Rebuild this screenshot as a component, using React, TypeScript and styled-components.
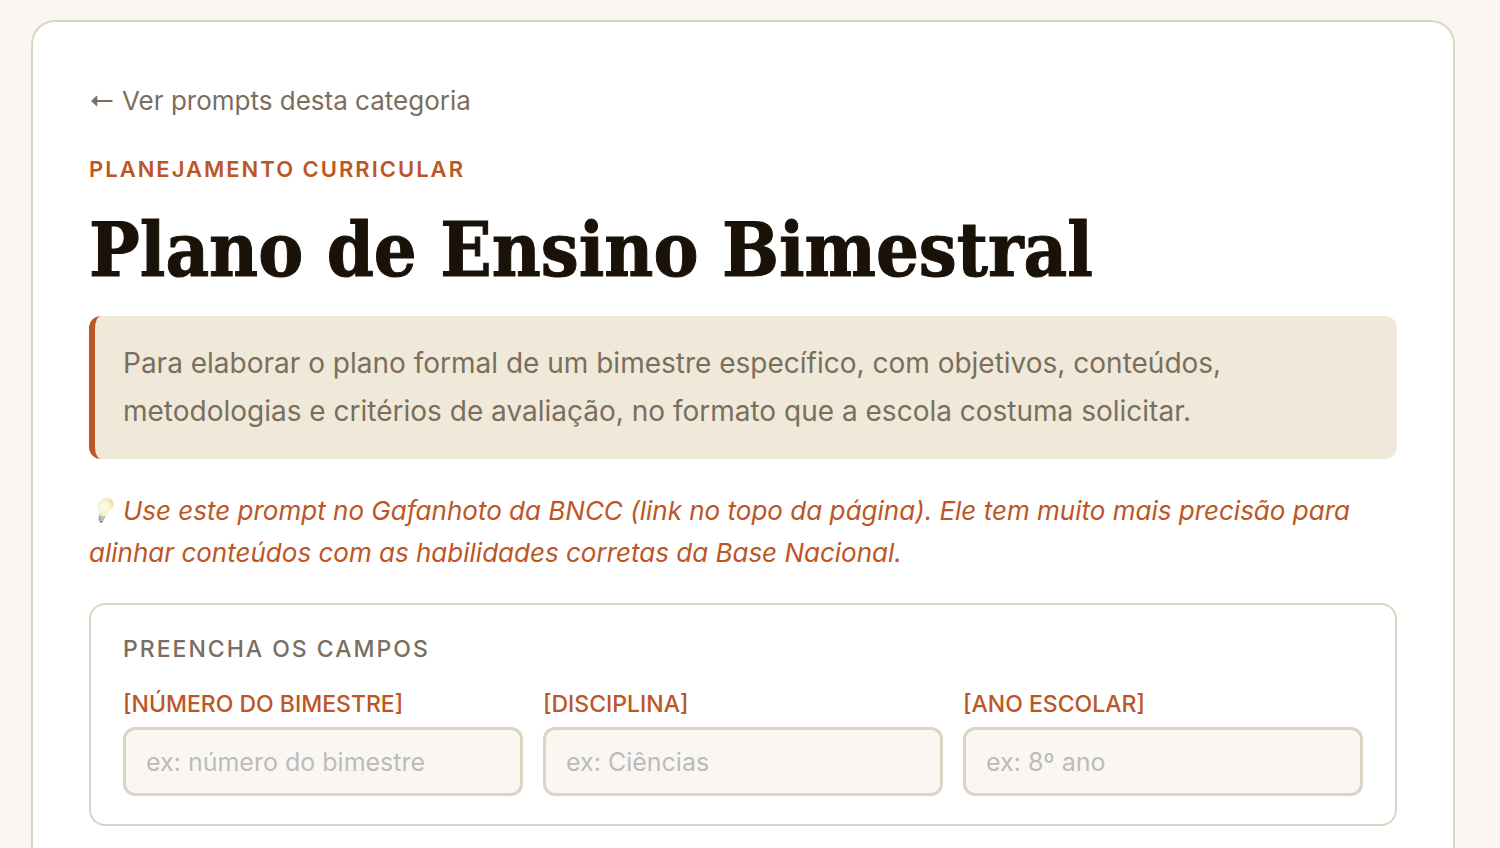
import React from 'react';
import styled, { createGlobalStyle } from 'styled-components';

const color = {
  page: '#faf7f2',
  card: '#ffffff',
  line: '#ddd5c3',
  ink: '#1a1208',
  muted: '#7a6e5e',
  accent: '#bd5625',
  sand: '#f0e9d9',
  placeholder: '#bbbbbb',
};

const GlobalStyle = createGlobalStyle`
  *, *::before, *::after { box-sizing: border-box; }
  body {
    margin: 0;
    background: ${color.page};
    color: ${color.ink};
    font-family: Inter, 'Liberation Sans', sans-serif;
  }
`;

const Page = styled.main`
  min-height: 100vh;
  display: flex;
  padding: 20px 45px 0 31px;
`;

const Card = styled.article`
  flex: 1;
  min-width: 0;
  padding: 56px 56px 20px;
  background: ${color.card};
  border: 2px solid ${color.line};
  border-bottom: none;
  border-radius: 24px 24px 0 0;
`;

const BackLink = styled.a`
  display: flex;
  width: fit-content;
  align-items: center;
  gap: 9px;
  color: ${color.muted};
  font-size: 26px;
  line-height: 46px;
  text-decoration: none;
`;

const Eyebrow = styled.p`
  margin: 27px 0 0;
  color: ${color.accent};
  font-size: 22px;
  font-weight: 600;
  line-height: 36px;
  letter-spacing: 2px;
  text-transform: uppercase;
`;

const Title = styled.h1`
  margin: 19px 0 22px;
  font-family: 'DejaVu Serif Condensed', 'DejaVu Serif', serif;
  font-size: 75px;
  font-weight: 700;
  line-height: 88px;
  -webkit-text-stroke: 1px ${color.ink};
`;

const Description = styled.p`
  margin: 0;
  padding: 23px 28px 24px;
  background: ${color.sand};
  border-left: 6px solid ${color.accent};
  border-radius: 12px;
  color: ${color.muted};
  font-size: 28px;
  line-height: 48px;
`;

const Tip = styled.p`
  margin: 31px 0 29px;
  color: ${color.accent};
  font-size: 26px;
  font-style: italic;
  line-height: 42px;
`;

const BulbIcon = styled.svg`
  width: 34px;
  height: 28px;
  vertical-align: -5px;
`;

const Fields = styled.section`
  padding: 26px 32px 28px;
  border: 2px solid ${color.line};
  border-radius: 16px;
`;

const FieldsTitle = styled.h2`
  margin: 0 0 22px;
  color: ${color.muted};
  font-size: 23px;
  font-weight: 500;
  line-height: 36px;
  letter-spacing: 2px;
  text-transform: uppercase;
`;

const FieldGrid = styled.div`
  display: grid;
  grid-template-columns: repeat(3, minmax(0, 1fr));
  gap: 20px;
`;

const Field = styled.div`
  display: flex;
  flex-direction: column;
  gap: 8px;
`;

const Label = styled.label`
  color: ${color.accent};
  font-size: 23px;
  font-weight: 500;
  line-height: 30px;
`;

const Input = styled.input`
  width: 100%;
  padding: 17px 20px 15px;
  background: ${color.page};
  border: 3px solid ${color.line};
  border-radius: 12px;
  color: ${color.ink};
  font-family: inherit;
  font-size: 25px;
  line-height: 31px;

  &::placeholder {
    color: ${color.placeholder};
    opacity: 1;
  }
`;

const fields = [
  { id: 'bimestre', label: '[NÚMERO DO BIMESTRE]', hint: 'ex: número do bimestre' },
  { id: 'disciplina', label: '[DISCIPLINA]', hint: 'ex: Ciências' },
  { id: 'ano', label: '[ANO ESCOLAR]', hint: 'ex: 8º ano' },
];

function Arrow() {
  return (
    <svg width="24" height="16" viewBox="0 0 24 16" aria-hidden="true">
      <path d="M7 8H23.500" stroke="currentColor" strokeWidth="2" />
      <path d="M2.600 8L7.800 3V13Z" fill="currentColor" stroke="currentColor" strokeWidth="1" strokeLinejoin="round" />
    </svg>
  );
}

function Bulb() {
  return (
    <BulbIcon viewBox="0 0 34 28" aria-hidden="true">
      <defs>
        <radialGradient id="glass" cx="0.4" cy="0.55" r="0.65">
          <stop offset="0" stopColor="#fffef6" />
          <stop offset="0.6" stopColor="#faf3d2" />
          <stop offset="1" stopColor="#eedf9c" />
        </radialGradient>
        <linearGradient id="metal" x1="0" x2="1">
          <stop offset="0" stopColor="#8b8d90" />
          <stop offset="0.5" stopColor="#dcdddd" />
          <stop offset="1" stopColor="#b1b3b5" />
        </linearGradient>
      </defs>
      <path
        d="M18.500 1.500C22.500 1.500 25 4 24.300 8C23.600 12 19 14.500 16.300 19L10.300 18.200C11 14.500 8.200 12.500 9.200 8C10.200 3.800 14 1.500 18.500 1.500Z"
        fill="url(#glass)"
        stroke="#eadfae"
        strokeWidth="0.5"
      />
      <path d="M13.200 18L14.600 11.500L17.200 11.800L14.800 18" fill="none" stroke="#f0e6b4" strokeWidth="0.5" />
      <path d="M10.200 18.200L16.300 19L14.800 23.400L13 25.200H11.200L9.600 22.800Z" fill="url(#metal)" />
      <path d="M10 20.200L15.600 21M9.800 22.200L15 22.900" stroke="#96989b" strokeWidth="0.6" />
      <path d="M10.600 24H13.900L12.700 25.500H11.400Z" fill="#66686c" />
    </BulbIcon>
  );
}

export default function App() {
  return (
    <>
      <GlobalStyle />
      <Page>
        <Card>
          <BackLink href="#categoria">
            <Arrow />
            Ver prompts desta categoria
          </BackLink>
          <Eyebrow>Planejamento Curricular</Eyebrow>
          <Title>Plano de Ensino Bimestral</Title>
          <Description>
            Para elaborar o plano formal de um bimestre específico, com objetivos, conteúdos,
            metodologias e critérios de avaliação, no formato que a escola costuma solicitar.
          </Description>
          <Tip>
            <Bulb />
            Use este prompt no Gafanhoto da BNCC (link no topo da página). Ele tem muito mais
            precisão para alinhar conteúdos com as habilidades corretas da Base Nacional.
          </Tip>
          <Fields aria-labelledby="fields-title">
            <FieldsTitle id="fields-title">Preencha os campos</FieldsTitle>
            <FieldGrid>
              {fields.map((field) => (
                <Field key={field.id}>
                  <Label htmlFor={field.id}>{field.label}</Label>
                  <Input id={field.id} type="text" placeholder={field.hint} />
                </Field>
              ))}
            </FieldGrid>
          </Fields>
        </Card>
      </Page>
    </>
  );
}
